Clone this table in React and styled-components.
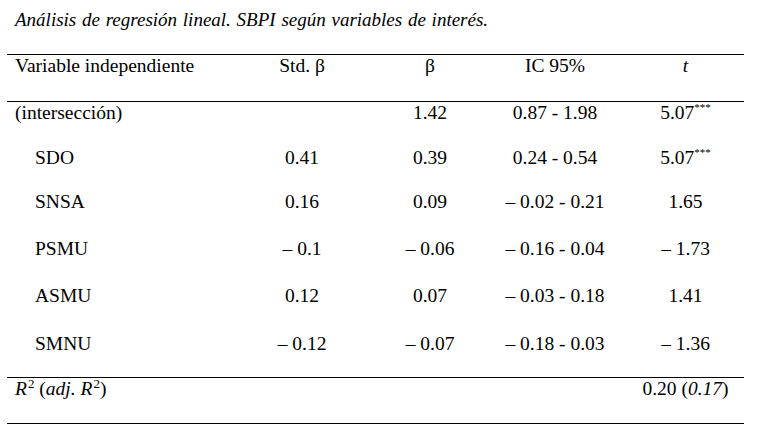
import React from "react";
import styled, { createGlobalStyle } from "styled-components";

const serif = `"Liberation Serif", "Times New Roman", serif`;

const GlobalStyle = createGlobalStyle`
  html, body {
    margin: 0;
    padding: 0;
    background: #ffffff;
  }
`;

const Page = styled.div`
  width: 761px;
  height: 424px;
  padding: 9px 0 0 7px;
  box-sizing: border-box;
  overflow: hidden;
  font-family: ${serif};
  color: #000;
`;

const Caption = styled.div`
  font-family: ${serif};
  font-style: italic;
  font-size: 19px;
  line-height: 22px;
  padding-left: 8px;
  margin-bottom: 23px;
  word-spacing: 1px;
`;

const Table = styled.table`
  width: 737px;
  border-collapse: collapse;
  table-layout: fixed;
  font-family: ${serif};
  font-size: 19.5px;
  line-height: 22px;
  color: #000;
`;

const Row = styled.tr`
  height: ${(p) => p.$h || 46}px;
  border-top: ${(p) => (p.$rule ? "1px solid #000" : "none")};
  border-bottom: ${(p) => (p.$bottom ? "1px solid #000" : "none")};
`;

const Cell = styled.td`
  vertical-align: top;
  padding: 0 0 0 ${(p) => p.$indent || 0}px;
  text-align: ${(p) => (p.$left ? "left" : "center")};
  white-space: nowrap;
`;

const Stars = styled.sup`
  font-size: 11px;
  line-height: 0;
  vertical-align: 8px;
`;

const Ital = styled.span`
  font-style: italic;
`;

const Power = styled.sup`
  font-style: normal;
  font-size: 13px;
  line-height: 0;
  vertical-align: 7px;
  margin-left: 1px;
`;

const rows = [
  { name: "SDO", h: 44, std: "0.41", b: "0.39", ic: "0.24 - 0.54", t: "5.07", sig: "***" },
  { name: "SNSA", h: 47, std: "0.16", b: "0.09", ic: "– 0.02 - 0.21", t: "1.65" },
  { name: "PSMU", h: 47, std: "– 0.1", b: "– 0.06", ic: "– 0.16 - 0.04", t: "– 1.73" },
  { name: "ASMU", h: 48, std: "0.12", b: "0.07", ic: "– 0.03 - 0.18", t: "1.41" },
  { name: "SMNU", h: 45, std: "– 0.12", b: "– 0.07", ic: "– 0.18 - 0.03", t: "– 1.36" },
];

export default function App() {
  return (
    <Page>
      <GlobalStyle />
      <Caption>
        Análisis de regresión lineal. SBPI según variables de interés.
      </Caption>
      <Table>
        <colgroup>
          <col style={{ width: 220 }} />
          <col style={{ width: 150 }} />
          <col style={{ width: 106 }} />
          <col style={{ width: 144 }} />
          <col style={{ width: 117 }} />
        </colgroup>
        <tbody>
          <Row $rule $h={47}>
            <Cell $left $indent={8}>Variable independiente</Cell>
            <Cell>Std. β</Cell>
            <Cell>β</Cell>
            <Cell>IC 95%</Cell>
            <Cell>
              <Ital>t</Ital>
            </Cell>
          </Row>
          <Row $rule $h={45}>
            <Cell $left $indent={8}>(intersección)</Cell>
            <Cell />
            <Cell>1.42</Cell>
            <Cell>0.87 - 1.98</Cell>
            <Cell>
              5.07<Stars>***</Stars>
            </Cell>
          </Row>
          {rows.map((r) => (
            <Row key={r.name} $h={r.h}>
              <Cell $left $indent={28}>{r.name}</Cell>
              <Cell>{r.std}</Cell>
              <Cell>{r.b}</Cell>
              <Cell>{r.ic}</Cell>
              <Cell>
                {r.t}
                {r.sig && <Stars>{r.sig}</Stars>}
              </Cell>
            </Row>
          ))}
          <Row $rule $bottom>
            <Cell $left $indent={8}>
              <Ital>R</Ital>
              <Power>2</Power> (<Ital>adj. R</Ital>
              <Power>2</Power>)
            </Cell>
            <Cell />
            <Cell />
            <Cell />
            <Cell>
              0.20 (<Ital>0.17</Ital>)
            </Cell>
          </Row>
        </tbody>
      </Table>
    </Page>
  );
}
